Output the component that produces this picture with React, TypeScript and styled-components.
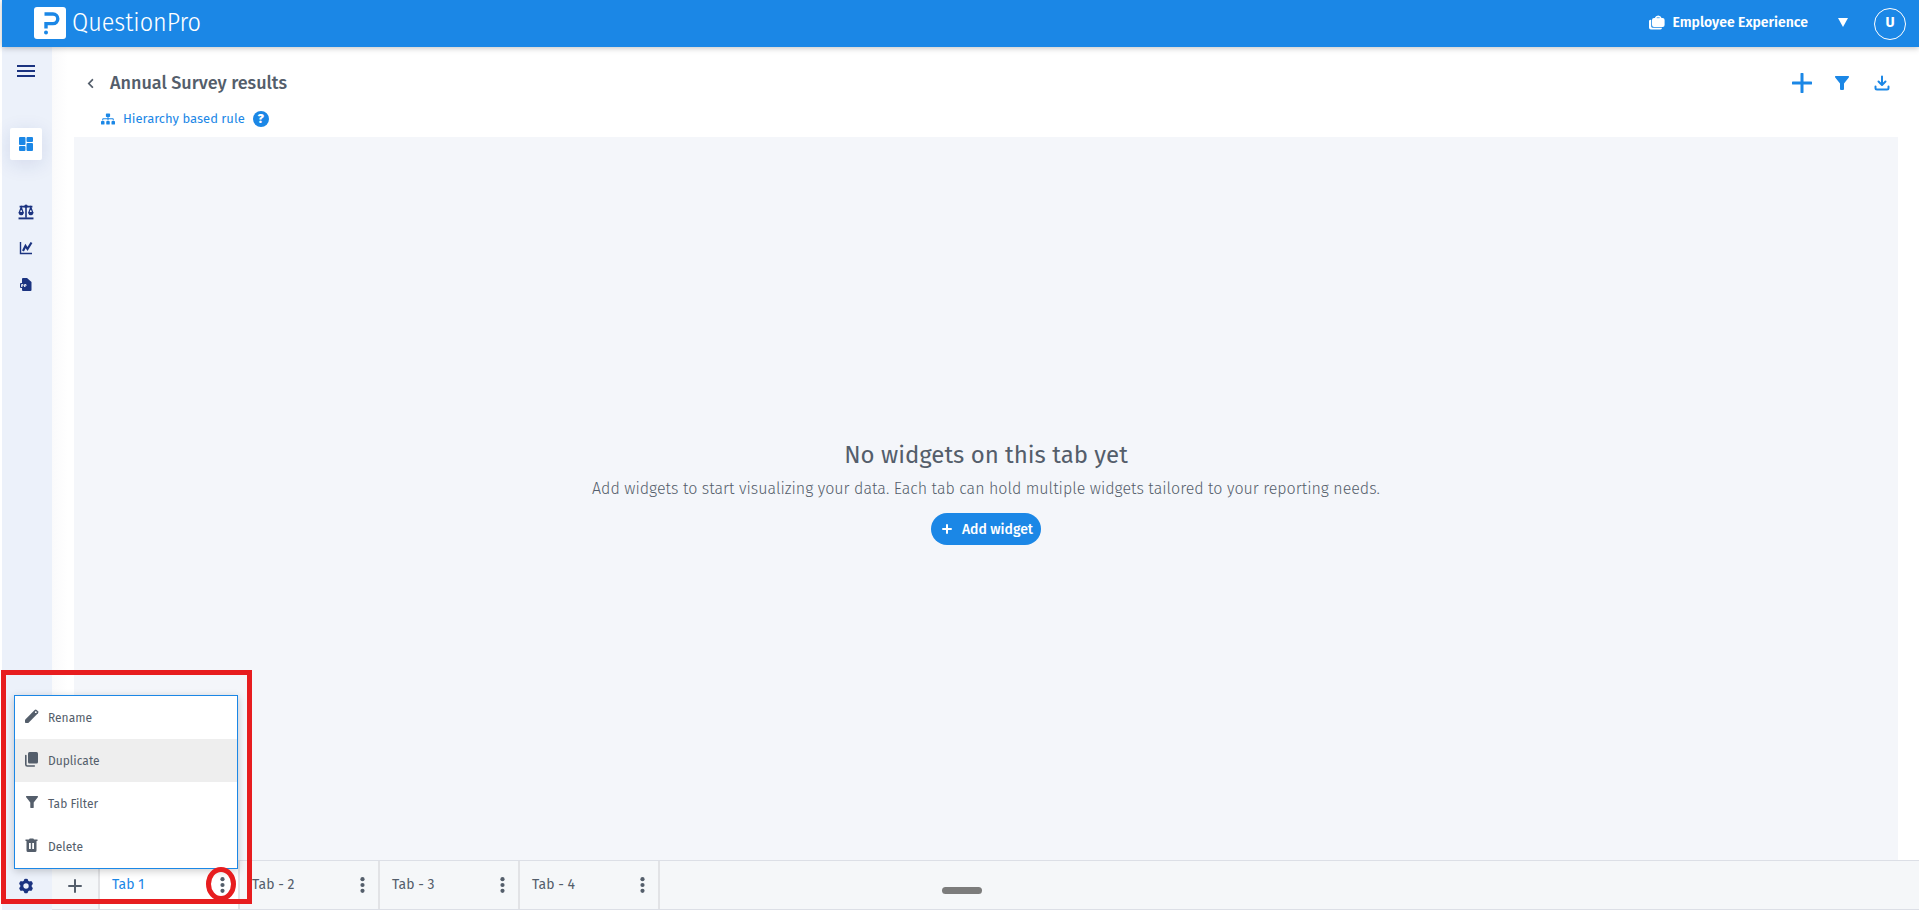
import React from "react";
import styled, { createGlobalStyle } from "styled-components";
import { FaChevronLeft, FaSitemap } from "react-icons/fa";

const blue = "#1b87e6";
const navy = "#1b3380";
const ink = "#545e6b";

const GlobalStyle = createGlobalStyle`
  * { box-sizing: border-box; }
  body {
    margin: 0;
    background: #fff;
    color: ${ink};
    font-family: "Fira Sans", "Noto Sans", sans-serif;
    font-size: 14px;
  }
  button { font: inherit; color: inherit; background: none; border: 0; padding: 0; cursor: pointer; }
  a { color: inherit; text-decoration: none; }
  svg { display: block; flex: none; }
  h1, h2, p { margin: 0; }
`;

const Shell = styled.div`
  position: relative;
  display: flex;
  flex-direction: column;
  min-height: 100vh;
  padding-left: 2px;
`;

const TopBar = styled.header`
  position: relative;
  z-index: 2;
  display: flex;
  align-items: center;
  height: 47px;
  padding: 0 13px 0 32px;
  background: ${blue};
  color: #fff;
  box-shadow: 0 1px 6px rgba(0, 0, 0, 0.25);
`;

const Brand = styled.a`
  display: flex;
  align-items: center;
  gap: 6px;
  padding-bottom: 1px;
  font-family: "Fira Sans Condensed", "Fira Sans", "Noto Sans", sans-serif;
  font-size: 26px;
  font-weight: 300;
  line-height: 32px;
`;

const ProductSwitch = styled.button`
  display: flex;
  align-items: center;
  gap: 7px;
  margin-left: auto;
  padding-bottom: 2px;
  font-weight: 600;
  line-height: 24px;
`;

const Caret = styled.span`
  margin-left: 23px;
  border: 5px solid transparent;
  border-top: 9px solid #fff;
  border-bottom: 0;
`;

const Avatar = styled.button`
  width: 32px;
  height: 32px;
  margin-left: 26px;
  padding-bottom: 2px;
  border: 1px solid #fff;
  border-radius: 50%;
  font-weight: 700;
`;

const Body = styled.div`
  display: flex;
  flex: 1;
`;

const SideBar = styled.nav`
  display: flex;
  flex-direction: column;
  align-items: center;
  width: 50px;
  flex: none;
  padding-right: 2px;
  background: #ecf1fa;
  color: ${navy};
`;

const SideButton = styled.button<{ $tall?: boolean }>`
  display: flex;
  align-items: center;
  justify-content: center;
  width: 100%;
  height: ${(p) => (p.$tall ? 48 : 36)}px;
`;

const SideTile = styled.button`
  display: flex;
  align-items: center;
  justify-content: center;
  width: 32px;
  height: 32px;
  margin: 33px 0 34px;
  border-radius: 2px;
  background: #fff;
  color: ${blue};
  box-shadow: 0 4px 20px rgba(27, 51, 128, 0.12);
`;

const SideFoot = styled.div`
  width: 100%;
  margin-top: auto;
`;

const Main = styled.main`
  display: flex;
  flex: 1;
  flex-direction: column;
  min-width: 0;
`;

const Content = styled.div`
  display: flex;
  flex: 1;
  flex-direction: column;
  padding: 18px 21px 0 22px;
  background: linear-gradient(90deg, #fafafb, #fff 16px);
`;

const TitleRow = styled.div`
  display: flex;
  align-items: center;
  height: 36px;
  padding: 0 4px;
`;

const Title = styled.h1`
  margin-left: 8px;
  font-size: 18px;
  font-weight: 500;
  line-height: 24px;
`;

const Actions = styled.div`
  display: flex;
  gap: 16px;
  margin-left: auto;
  color: ${blue};
`;

const IconButton = styled.button`
  display: flex;
  align-items: center;
  justify-content: center;
  width: 24px;
  height: 24px;
`;

const RuleRow = styled.div`
  display: flex;
  align-items: center;
  gap: 8px;
  height: 36px;
  padding-left: 27px;
  color: ${blue};
  font-size: 13px;
`;

const RuleLink = styled.a`
  display: flex;
  align-items: center;
  gap: 8px;
  padding-bottom: 1px;
`;

const Help = styled.button`
  width: 16px;
  height: 16px;
  border-radius: 50%;
  background: ${blue};
  color: #fff;
  font-size: 13px;
  font-weight: 800;
  line-height: 16px;
`;

const Canvas = styled.section`
  display: flex;
  flex: 1;
  flex-direction: column;
  align-items: center;
  justify-content: center;
  padding-bottom: 14px;
  background: #f4f6fa;
`;

const EmptyTitle = styled.h2`
  font-size: 24px;
  font-weight: 400;
  line-height: 32px;
`;

const EmptyText = styled.p`
  margin: 6px 0 12px;
  font-size: 16px;
  font-weight: 300;
  line-height: 24px;
`;

const AddButton = styled.button`
  display: flex;
  align-items: center;
  gap: 10px;
  height: 32px;
  padding: 1px 8px 0 11px;
  border-radius: 16px;
  background: ${blue};
  color: #fff;
  font-weight: 500;
`;

const TabBar = styled.footer`
  display: flex;
  height: 50px;
  border: 1px solid #dcdfe6;
  border-width: 1px 0;
  background: #f5f7f9;
`;

const AddTab = styled.button`
  display: flex;
  align-items: center;
  justify-content: center;
  width: 48px;
  padding-top: 2px;
  border-right: 2px solid #e2e3e6;
`;

const Tab = styled.div<{ $active?: boolean }>`
  position: relative;
  display: flex;
  align-items: center;
  justify-content: space-between;
  width: 140px;
  padding: 0 8px 0 12px;
  border-right: 2px solid #e2e3e6;
  background: ${(p) => (p.$active ? "#fff" : "transparent")};
  color: ${(p) => (p.$active ? blue : ink)};
`;

const TabLabel = styled.button`
  line-height: 24px;
`;

const Kebab = styled.button`
  display: flex;
  justify-content: center;
  width: 16px;
  color: ${ink};
`;

const Menu = styled.div`
  position: absolute;
  z-index: 3;
  right: 0;
  bottom: 40px;
  width: 224px;
  border: 1px solid ${blue};
  background: #fff;
  color: ${ink};
  box-shadow: 0 2px 8px rgba(0, 0, 0, 0.2);
`;

const MenuItem = styled.button<{ $hover?: boolean }>`
  display: flex;
  align-items: center;
  gap: 9px;
  width: 100%;
  height: 43px;
  padding: 0 9px;
  background: ${(p) => (p.$hover ? "#eee" : "#fff")};
  font-size: 12px;
`;

const MenuIcon = styled.span`
  display: flex;
  justify-content: center;
  width: 15px;
  padding-bottom: 3px;
`;

const Frame = styled.div`
  position: absolute;
  z-index: 4;
  right: -14px;
  bottom: 5px;
  width: 251px;
  height: 234px;
  border: 5px solid #e71d1f;
  pointer-events: none;
`;

const Ring = styled.div`
  position: absolute;
  z-index: 4;
  right: 2px;
  bottom: 8px;
  width: 30px;
  height: 34px;
  border: 5px solid #e71d1f;
  border-radius: 50%;
  pointer-events: none;
`;

const Handle = styled.div`
  position: absolute;
  left: 50%;
  bottom: 16px;
  width: 40px;
  height: 7px;
  margin-left: -18px;
  border-radius: 4px;
  background: #7c7c7c;
`;

const Logo = () => (
  <svg width="32" height="32" viewBox="0 0 32 32">
    <rect width="32" height="32" rx="3" fill="#fff" />
    <path d="M10.500 7H19A4.800 4.800 0 0 1 19 16.600H12V21.500" fill="none" stroke={blue} strokeWidth="3.400" />
    <circle cx="12" cy="25.500" r="2" fill={blue} />
  </svg>
);

const Briefcase = () => (
  <svg width="16" height="15" viewBox="0 0 16 15" fill="#fff">
    <path d="M3 5a2 2 0 0 1 2-2h.8Q6.500.5 9.200.5T12.600 3h1a2 2 0 0 1 2 2v5a2 2 0 0 1-2 2H5a2 2 0 0 1-2-2z" />
    <path d="M0 6.500A1.500 1.500 0 0 1 2.200 5v6.500q.3 1.200 1.500 1.200H13q0 1.800-1.500 1.800H2a2 2 0 0 1-2-2z" />
    <path d="M7.700 2.700h3" stroke={blue} strokeWidth=".7" />
  </svg>
);

const Bars = () => (
  <svg width="18" height="12" viewBox="0 0 18 12" fill="currentColor">
    <path d="M0 0h18v2H0zM0 5h18v2H0zM0 10h18v2H0z" />
  </svg>
);

const Dashboard = () => (
  <svg width="14" height="14" viewBox="0 0 14 14" fill="currentColor">
    <rect width="6.500" height="8" rx="1" />
    <rect y="9" width="6.500" height="5" rx="1" />
    <rect x="7.500" width="6.500" height="5" rx="1" />
    <rect x="7.500" y="6" width="6.500" height="8" rx="1" />
  </svg>
);

const Scales = () => (
  <svg width="16" height="16" viewBox="0 0 15 15" fill="none" stroke="currentColor">
    <path d="M1.500 2.500h12M7.500 2v11" strokeWidth="1.500" />
    <path d="M.5 13.500h14" strokeWidth="1.800" />
    <circle cx="7.500" cy="2" r="1.600" fill="currentColor" stroke="none" />
    <path d="M3 3L1.200 8h3.600zM12 3l-1.800 5h3.600z" strokeWidth="1.200" />
    <path d="M.5 8h5q-.3 2.500-2.500 2.500T.5 8zM9.500 8h5q-.3 2.500-2.500 2.500T9.500 8z" fill="currentColor" stroke="none" />
  </svg>
);

const Trend = () => (
  <svg width="14" height="14" viewBox="0 0 14 14" fill="none" stroke="currentColor">
    <path d="M1.500 1v11.500H13" strokeWidth="1.400" />
    <path d="M4 10L6.500 5L8.500 8L12.500 1.500" strokeWidth="2.200" />
  </svg>
);

const FilePP = () => (
  <svg width="12" height="13" viewBox="0 0 12 13" fill="currentColor">
    <path d="M2 1a1 1 0 0 1 1-1h4l4.500 4v8a1 1 0 0 1-1 1H3a1 1 0 0 1-1-1z" />
    <rect y="5" width="7.500" height="5" rx="1" />
    <path d="M1.500 9V6.500H3V8H1.500M4.500 9V6.500H6V8H4.500" fill="none" stroke="#fff" strokeWidth="0.800" />
  </svg>
);

const Gear = () => (
  <svg width="16" height="16" viewBox="0 0 16 16">
    <circle cx="8" cy="8" r="4.200" fill="none" stroke="currentColor" strokeWidth="3" />
    {[0, 60, 120, 180, 240, 300].map((angle) => (
      <path key={angle} d="M5.600 3.500L6.400 1Q8 .4 9.600 1l.8 2.500z" fill="currentColor" transform={`rotate(${angle} 8 8)`} />
    ))}
  </svg>
);

const Plus = ({ size, weight }: { size: number; weight: number }) => (
  <svg width={size} height={size} viewBox={`0 0 ${size} ${size}`} stroke="currentColor" strokeWidth={weight} strokeLinecap="round">
    <path d={`M${size / 2} 1V${size - 1}M1 ${size / 2}H${size - 1}`} />
  </svg>
);

const Funnel = ({ size }: { size: number }) => (
  <svg width={size} height={size} viewBox="0 0 14 14" fill="currentColor">
    <path d="M.5 0h13q.8.5.3 1.500L9 7.500V13q0 1-1 1H6q-1 0-1-1V7.500L.2 1.500Q-.3.5.5 0z" />
  </svg>
);

const Download = () => (
  <svg width="16" height="16" viewBox="0 0 16 16" fill="none" stroke="currentColor" strokeWidth="2" strokeLinecap="round" strokeLinejoin="round">
    <path d="M8 1.500V9M4.500 6.500L8 10l3.500-3.500" />
    <path d="M1.500 11.500v1.500q0 1.500 1.500 1.500h10q1.500 0 1.500-1.500v-1.500" />
  </svg>
);

const Dots = () => (
  <svg width="5" height="16" viewBox="0 0 5 16" fill="currentColor">
    <circle cx="2.500" cy="2.200" r="2.100" />
    <circle cx="2.500" cy="8" r="2.100" />
    <circle cx="2.500" cy="13.800" r="2.100" />
  </svg>
);

const Pencil = () => (
  <svg width="15" height="15" viewBox="0 0 15 15" fill="currentColor">
    <path d="M1 10.700L10.700 1q1-.8 2 0l1.300 1.300q.8 1 0 2L4.300 14H1.800Q1 14 1 13.200z" />
    <circle cx="11.800" cy="3.200" r=".9" fill="#fff" />
  </svg>
);

const Copy = () => (
  <svg width="15" height="15" viewBox="0 0 15 15" fill="currentColor">
    <rect x="4" width="10" height="11.500" rx="1.500" />
    <path d="M1.800 3.500V12.500q0 1.500 1.500 1.500h7" fill="none" stroke="currentColor" strokeWidth="1.600" strokeLinecap="round" />
  </svg>
);

const Trash = () => (
  <svg width="15" height="15" viewBox="0 0 15 15" fill="currentColor" fillRule="evenodd">
    <path d="M1.500 1.500H5l.7-1h3.600l.7 1h3.500V3h-12z" />
    <path d="M2.500 3h10v9.500q0 1.500-1.500 1.500H4q-1.500 0-1.500-1.500zM5 5v6h1.800V5zM8.200 5v6H10V5z" />
  </svg>
);

const menuItems = [
  { label: "Rename", icon: <Pencil /> },
  { label: "Duplicate", icon: <Copy /> },
  { label: "Tab Filter", icon: <Funnel size={12} /> },
  { label: "Delete", icon: <Trash /> },
];

const tabs = ["Tab 1", "Tab - 2", "Tab - 3", "Tab - 4"];

const TabMenu = () => (
  <>
    <Menu>
      {menuItems.map((item) => (
        <MenuItem key={item.label} $hover={item.label === "Duplicate"}>
          <MenuIcon>{item.icon}</MenuIcon>
          {item.label}
        </MenuItem>
      ))}
    </Menu>
    <Frame />
    <Ring />
  </>
);

export default function App() {
  return (
    <Shell>
      <GlobalStyle />
      <TopBar>
        <Brand href="#">
          <Logo />
          QuestionPro
        </Brand>
        <ProductSwitch>
          <Briefcase />
          Employee Experience
          <Caret />
        </ProductSwitch>
        <Avatar>U</Avatar>
      </TopBar>
      <Body>
        <SideBar>
          <SideButton $tall aria-label="Menu"><Bars /></SideButton>
          <SideTile aria-label="Dashboard"><Dashboard /></SideTile>
          <SideButton aria-label="Compare"><Scales /></SideButton>
          <SideButton aria-label="Trends"><Trend /></SideButton>
          <SideButton aria-label="Presentations"><FilePP /></SideButton>
          <SideFoot>
            <SideButton $tall aria-label="Settings"><Gear /></SideButton>
          </SideFoot>
        </SideBar>
        <Main>
          <Content>
            <TitleRow>
              <IconButton aria-label="Back"><FaChevronLeft size={11} /></IconButton>
              <Title>Annual Survey results</Title>
              <Actions>
                <IconButton aria-label="Add"><Plus size={20} weight={3} /></IconButton>
                <IconButton aria-label="Filter"><Funnel size={14} /></IconButton>
                <IconButton aria-label="Download"><Download /></IconButton>
              </Actions>
            </TitleRow>
            <RuleRow>
              <RuleLink href="#"><FaSitemap size={14} />Hierarchy based rule</RuleLink>
              <Help>?</Help>
            </RuleRow>
            <Canvas>
              <EmptyTitle>No widgets on this tab yet</EmptyTitle>
              <EmptyText>
                Add widgets to start visualizing your data. Each tab can hold multiple widgets tailored to your reporting needs.
              </EmptyText>
              <AddButton><Plus size={10} weight={2} />Add widget</AddButton>
            </Canvas>
          </Content>
          <TabBar>
            <AddTab aria-label="Add tab"><Plus size={14} weight={2} /></AddTab>
            {tabs.map((name, i) => (
              <Tab key={name} $active={i === 0}>
                <TabLabel>{name}</TabLabel>
                <Kebab aria-label={`${name} options`}><Dots /></Kebab>
                {i === 0 && <TabMenu />}
              </Tab>
            ))}
            <Handle />
          </TabBar>
        </Main>
      </Body>
    </Shell>
  );
}
